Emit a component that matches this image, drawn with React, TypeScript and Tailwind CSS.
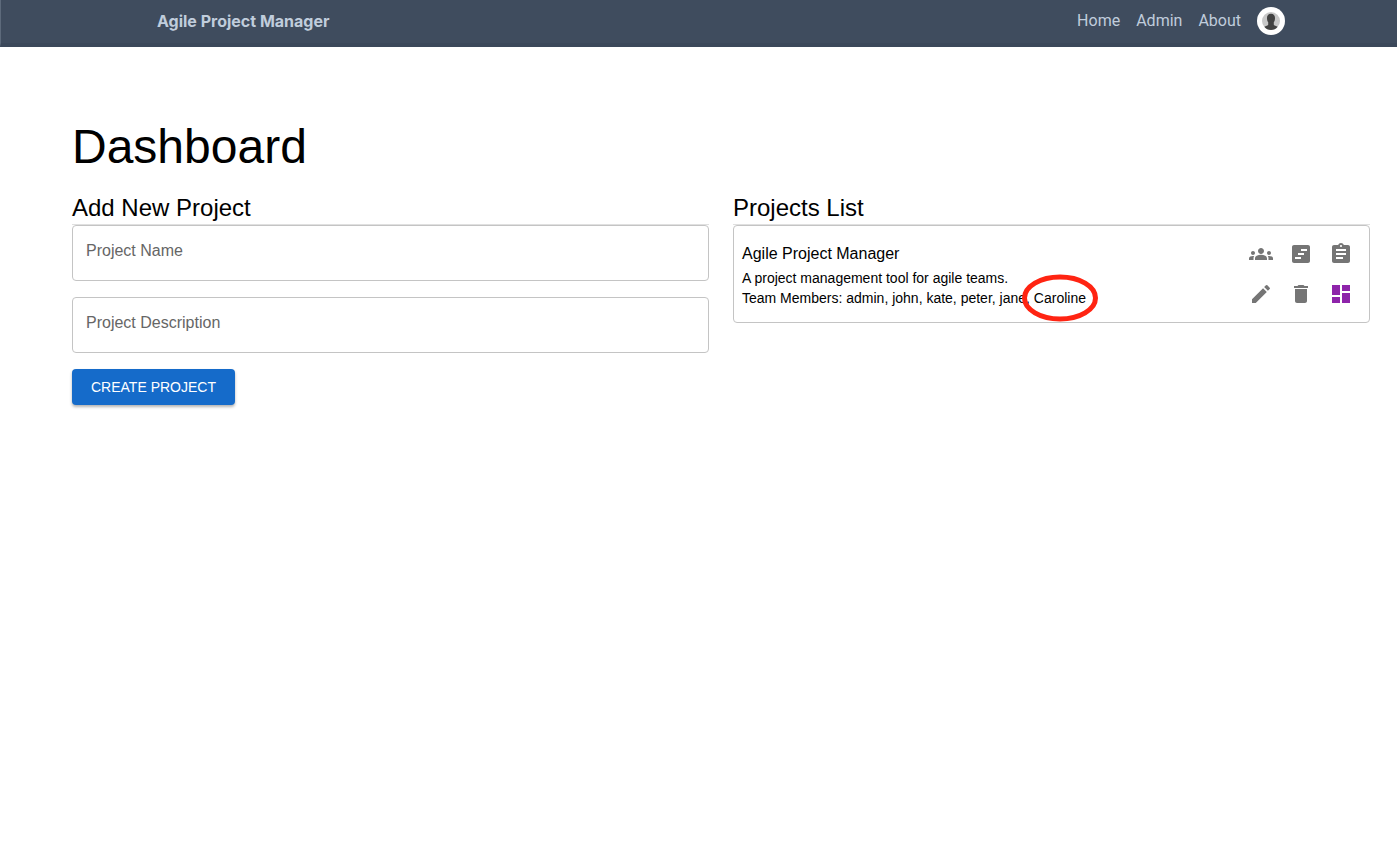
import { useState, type ReactNode } from "react";
import { MdAssignment, MdDashboard, MdDelete, MdEdit, MdGroups, MdViewTimeline } from "react-icons/md";

function Header() {
  return (
    <header className="flex h-[47px] items-center justify-between border-b-4 border-l border-b-[#3b485a] border-l-[#5d6a7b] bg-[#3f4c5e] pb-0.5 pl-[156px] pr-28 text-base text-[#c0cddc]">
      <a href="#home" className="font-[Inter,sans-serif] font-bold">Agile Project Manager</a>
      <nav className="flex items-center gap-4 font-[Roboto,sans-serif]">
        <a href="#home">Home</a>
        <a href="#admin">Admin</a>
        <a href="#about">About</a>
        <button type="button" aria-label="Account" className="size-7 rounded-full bg-white p-[5px]">
          <svg viewBox="0 0 18 18" className="size-full">
            <circle cx="9" cy="9" r="9" fill="#c8c8c8" />
            <path d="M9 1.800C6.300 1.800 5 3.500 5 5.900c0 1.900.4 3.300 1.200 4.300v2.300c0 .7-.6 1-1.500 1.300L2.400 14.800C3.900 16.900 6.300 18 9 18s5.100-1.100 6.600-3.200l-2.300-1c-.9-.3-1.500-.6-1.500-1.300v-2.300c.8-1 1.200-2.400 1.200-4.300 0-2.400-1.300-4.100-4-4.100Z" fill="#424242" />
          </svg>
        </button>
      </nav>
    </header>
  );
}

function Field({ id, label }: { id: string; label: string }) {
  const [value, setValue] = useState("");
  return (
    <div className="relative">
      <input
        id={id}
        type="text"
        value={value}
        onChange={(event) => setValue(event.target.value)}
        className="block h-14 w-full rounded border border-[#c4c4c4] px-[13px] text-base text-black"
      />
      {value === "" && (
        <label htmlFor={id} className="absolute left-3.5 top-3.5 text-base leading-6 text-[#666666]">{label}</label>
      )}
    </div>
  );
}

function IconButton({ label, children }: { label: string; children: ReactNode }) {
  return (
    <button type="button" aria-label={label} className="flex size-10 items-center justify-center text-2xl">
      {children}
    </button>
  );
}

function ProjectCard() {
  return (
    <article className="flex items-center justify-between rounded border border-[#c4c4c4] p-2">
      <div>
        <h3 className="text-base leading-7">Agile Project Manager</h3>
        <p className="text-sm leading-5">A project management tool for agile teams.</p>
        <p className="text-sm leading-5">
          Team Members: admin, john, kate, peter, jane,{" "}
          <span className="relative inline-block">
            Caroline
            <svg viewBox="0 0 76 48" className="pointer-events-none absolute left-1/2 top-1/2 h-12 w-[76px] max-w-none -translate-x-1/2 -translate-y-1/2">
              <ellipse cx="38" cy="24" rx="35.500" ry="21" fill="none" stroke="#ff2412" strokeWidth="5" />
            </svg>
          </span>
        </p>
      </div>
      <div className="grid grid-cols-3 text-[#757575]">
        <IconButton label="Team"><MdGroups /></IconButton>
        <IconButton label="Timeline"><MdViewTimeline /></IconButton>
        <IconButton label="Tasks"><MdAssignment /></IconButton>
        <IconButton label="Edit"><MdEdit /></IconButton>
        <IconButton label="Delete"><MdDelete /></IconButton>
        <IconButton label="Board"><MdDashboard className="text-[#8e24aa]" /></IconButton>
      </div>
    </article>
  );
}

export default function App() {
  return (
    <div className="min-h-screen bg-white font-['Liberation_Sans',Arial,sans-serif] text-black">
      <Header />
      <main className="pb-8 pl-[72px] pr-[27px] pt-[72px]">
        <h1 className="text-5xl leading-[56px]">Dashboard</h1>
        <div className="mt-[17px] grid grid-cols-2 gap-6">
          <section>
            <h2 className="border-b border-[#e0e0e0] text-2xl leading-8">Add New Project</h2>
            <form className="flex flex-col gap-4">
              <Field id="name" label="Project Name" />
              <Field id="description" label="Project Description" />
              <button type="button" className="h-9 self-start rounded bg-[#156bca] px-[19px] text-sm text-white shadow-[0_2px_3px_rgba(0,0,0,0.3)]">
                CREATE PROJECT
              </button>
            </form>
          </section>
          <section>
            <h2 className="border-b border-[#e0e0e0] text-2xl leading-8">Projects List</h2>
            <ProjectCard />
          </section>
        </div>
      </main>
    </div>
  );
}
